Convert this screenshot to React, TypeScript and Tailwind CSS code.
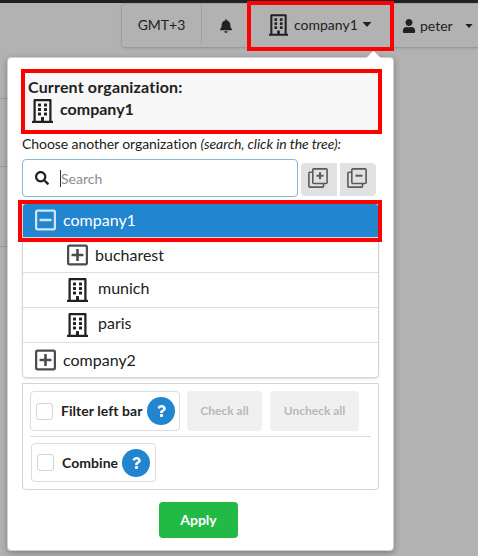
import React from "react";
import {
  FaBell,
  FaQuestion,
  FaRegBuilding,
  FaRegMinusSquare,
  FaRegPlusSquare,
  FaSearch,
  FaUser,
} from "react-icons/fa";

function Stack({ minus }: { minus?: boolean }) {
  return (
    <svg viewBox="0 0 20 20" className="size-5" fill="none" stroke="#5a5a5a" strokeWidth="1.600" aria-hidden="true">
      <rect x="4.800" y="0.900" width="14.300" height="14.600" rx="1" />
      <path d="M4.500 4.300H1.800Q0.900 4.300 0.900 5.200V18.200Q0.900 19.100 1.800 19.100H14.600Q15.500 19.100 15.500 18.200V15.500" />
      <path strokeWidth="2" d={minus ? "M8.500 7.700H15.500" : "M8.500 7.700H15.500M12 4.200V11.200"} />
    </svg>
  );
}

function Caret({ className = "" }: { className?: string }) {
  return (
    <svg viewBox="0 0 10 5" className={className} fill="currentColor" aria-hidden="true">
      <path d="M0.500 0H9.500L5.400 4.600Q5 5 4.600 4.600Z" />
    </svg>
  );
}

function Help() {
  return (
    <span className="flex size-7 shrink-0 items-center justify-center rounded-full bg-[#2185d0] text-white">
      <FaQuestion className="h-3 w-[9px]" />
    </span>
  );
}

function CheckField({ label, className }: { label: string; className: string }) {
  return (
    <label className={`flex items-center rounded border border-[#dcdcdd] pl-[5px] ${className}`}>
      <span className="size-[17px] shrink-0 rounded-[3px] border border-[#d4d4d5] bg-white" />
      <span className="ml-[8px] whitespace-nowrap text-[14px] leading-5 font-bold tracking-[0.05px]">{label}</span>
      <span className="ml-auto">
        <Help />
      </span>
    </label>
  );
}

function TopBar() {
  return (
    <header className="flex h-12 flex-col bg-[#b2b2b2]">
      <div className="h-[3px] bg-[#212121]" />
      <div className="ml-[121px] flex h-[45px] items-start rounded-l border border-r-0 border-[#9f9f9f] border-b-[#999] shadow-[0_1px_2px_#a2a2a2]">
        <div className="flex h-10 w-20 items-center justify-center border-r border-[#9f9f9f] text-[14px]">
          <span>GMT+3</span>
        </div>
        <div className="flex h-10 w-[46px] items-center justify-center pl-[2px] pt-[3px]">
          <FaBell className="h-[14px] w-3" />
        </div>
        <div className="flex h-10 w-[146px] items-center pl-[21px]">
          <FaRegBuilding className="relative top-px h-[22px] w-[19px]" />
          <span className="ml-[6px] text-[14px]">company1</span>
          <Caret className="ml-[4px] h-[5px] w-[10px]" />
        </div>
        <div className="flex h-10 flex-1 items-center pt-[3px] pl-[8px]">
          <FaUser className="h-[14px] w-[14px]" />
          <span className="ml-[4px] text-[14px]">peter</span>
          <Caret className="ml-auto mr-[5px] h-1 w-2" />
        </div>
      </div>
    </header>
  );
}

function OrganizationMenu() {
  return (
    <section className="absolute top-[57px] left-[7px] z-10 flex h-[494px] w-[387px] flex-col rounded border border-[#d0d0d0] bg-white px-[13px] pt-[11px] shadow-[0_2px_6px_rgba(0,0,0,0.3)]">
      <div className="absolute -top-[5px] left-[360px] size-[11px] rotate-45 bg-white" />

      <div className="h-[65px] w-[361px] border-4 border-[#f00] bg-[#f7f7f7] pl-[3px] pt-[3px] font-bold">
        <div className="text-[16px] leading-[22px] tracking-[0.17px]">Current organization:</div>
        <div className="flex h-[25px] items-center pl-1">
          <FaRegBuilding className="h-6 w-[21px]" />
          <span className="relative -top-[2px] ml-[7px] text-[16px] leading-5">company1</span>
        </div>
      </div>

      <p className="ml-px h-[25px] whitespace-nowrap text-[14px] leading-[20px] tracking-[-0.07px]">
        Choose another organization <em>(search, click in the tree):</em>
      </p>

      <div className="ml-px flex h-[38px] items-center">
        <div className="flex h-[38px] w-[276px] items-center rounded border border-[#85b7d9] pl-3">
          <FaSearch className="size-[14px]" />
          <span className="ml-[11px] h-[17px] w-px bg-[#333]" />
          <span className="text-[14px] text-[#8c8c8c]">Search</span>
        </div>
        <div className="mt-[2px] ml-[3px] flex gap-[3px]">
          <button className="flex h-[33px] w-9 items-center justify-center rounded-l bg-[#e0e1e2] pb-[2px] pr-[3px]">
            <Stack />
          </button>
          <button className="flex h-[33px] w-9 items-center justify-center rounded-r bg-[#e0e1e2] pb-[2px] pr-[3px]">
            <Stack minus />
          </button>
        </div>
      </div>

      <div className="relative mt-[6px] ml-px h-[175px] w-[357px] rounded border border-[#d4d4d5] text-[16px] shadow-[0_1px_2px_rgba(34,36,38,0.15)]">
        <div className="flex h-[34px] items-center rounded-t-[3px] border-b border-[#dededf] bg-[#2185d0] pb-px pl-[12px] text-white">
          <FaRegMinusSquare className="h-6 w-[21px] text-[#d0e4f5]" />
          <span className="ml-[7px] leading-5">company1</span>
        </div>
        <div className="flex h-[35px] items-center border-b border-[#dededf] pl-[44px]">
          <FaRegPlusSquare className="h-6 w-[21px] text-[#4c4c4c]" />
          <span className="ml-[7px]">bucharest</span>
        </div>
        <div className="flex h-[35px] items-center border-b border-[#dededf] pl-[44px]">
          <FaRegBuilding className="h-6 w-[21px]" />
          <span className="relative -top-[2px] ml-[10px]">munich</span>
        </div>
        <div className="flex h-[35px] items-center border-b border-[#dededf] pl-[44px]">
          <FaRegBuilding className="h-6 w-[21px]" />
          <span className="relative -top-[2px] ml-[10px]">paris</span>
        </div>
        <div className="flex h-[34px] items-center pl-[12px]">
          <FaRegPlusSquare className="h-6 w-[21px] text-[#4c4c4c]" />
          <span className="ml-[7px]">company2</span>
        </div>
        <div className="absolute -top-[4px] -left-[5px] h-[42px] w-[364px] border-4 border-[#f00]" />
      </div>

      <div className="mt-[5px] ml-px h-[107px] w-[357px] rounded-b border border-[#d4d4d5] px-[7px] pt-[7px]">
        <div className="flex h-[46px] items-start border-b border-[#dcdcdd]">
          <CheckField label="Filter left bar" className="h-10 w-[150px] pr-1" />
          <button className="ml-[7px] h-10 w-[75px] rounded bg-[#f0f0f0] text-[12px] font-bold text-[#b8b8b8]">Check all</button>
          <button className="ml-2 h-10 w-[89px] rounded bg-[#f0f0f0] text-[12px] font-bold text-[#b8b8b8]">Uncheck all</button>
        </div>
        <CheckField label="Combine" className="mt-[6px] ml-px h-[39px] w-[125px] pr-[5px]" />
      </div>

      <button className="mt-[12px] ml-[138px] h-9 w-[79px] rounded bg-[#21ba45] pb-px text-[14px] font-bold text-white">Apply</button>
    </section>
  );
}

export default function App() {
  return (
    <main className="relative h-[556px] w-[478px] overflow-hidden bg-[#b2b2b2] font-['Lato',sans-serif] text-[#212121]">
      <TopBar />
      <div className="flex w-2 flex-col">
        <div className="h-[51px] border-b border-[#999]" />
        <div className="h-[68px] border-b border-[#999]" />
        <div className="h-[80px] border-b border-[#999]" />
      </div>
      <OrganizationMenu />
      <div className="absolute top-[1px] left-[247px] z-20 h-[50px] w-[147px] border-4 border-[#f00]" />
    </main>
  );
}
